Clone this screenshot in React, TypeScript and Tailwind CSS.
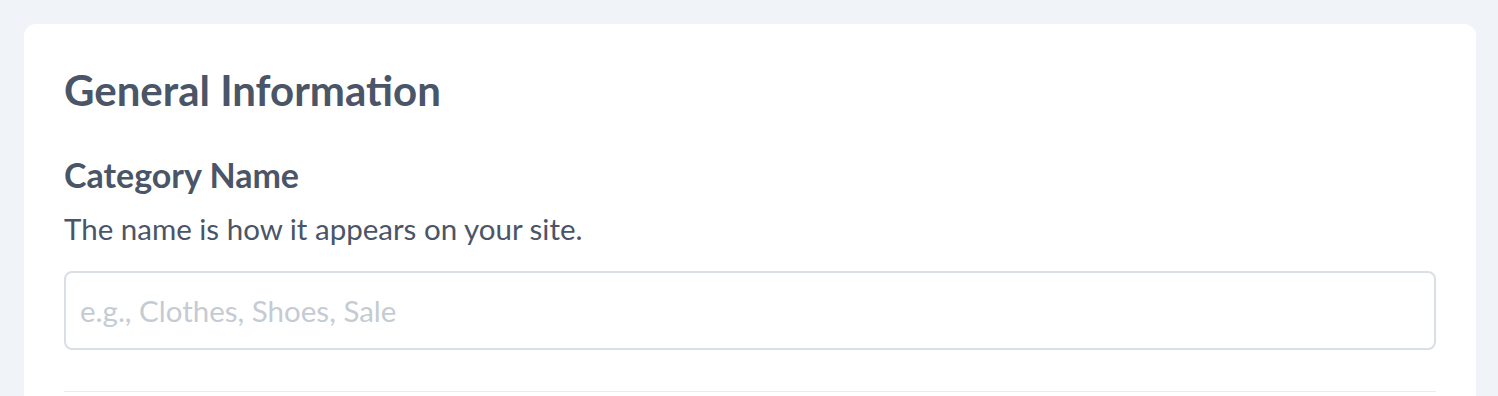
export default function App() {
  return (
    <div className="min-h-screen bg-[#f0f4f8] pt-6 pl-6 pr-[22px] pb-6 font-['Lato',sans-serif]">
      <div className="rounded-xl bg-white px-10 pt-[45px] pb-10">
        <h2 className="text-[42px] leading-[42px] font-bold text-[#4a5568]">General Information</h2>

        <div className="mt-[47px]">
          <label className="block text-[34px] leading-[34px] font-bold text-[#4a5568]">Category Name</label>
          <p className="mt-[22px] text-[29.5px] leading-[29.5px] text-[#4a5568]">
            The name is how it appears on your site.
          </p>
          <input
            type="text"
            placeholder="e.g., Clothes, Shoes, Sale"
            className="mt-[27px] block h-[79px] w-full rounded-lg border-2 border-[#dadee5] pl-[14px] pr-4 text-[29.5px] text-[#4a5568] placeholder:text-[#c5cbd3] focus:outline-none"
          />
        </div>

        <div className="mt-[41px] border-t border-[#e8ebef]" />
      </div>
    </div>
  )
}
